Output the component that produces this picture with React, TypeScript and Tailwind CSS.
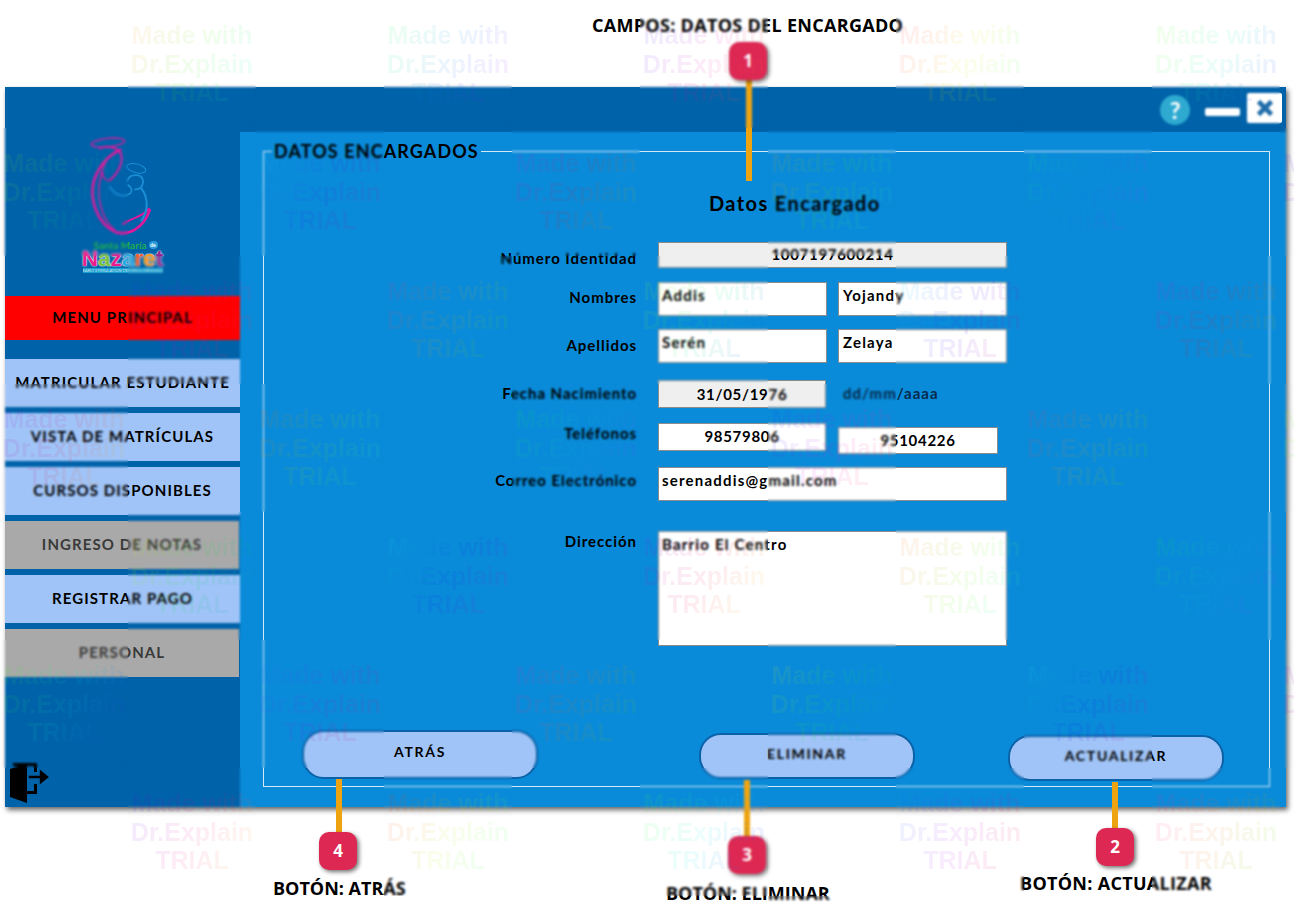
import React from "react";

const navBlue = "bg-[#a0c4f7] text-black h-[48px]";
const navGray = "bg-[#a9a9a9] text-[#3a3a3a] w-[234px] h-[48px]";

function NavItem({ text, cls, mt }: { text: string; cls: string; mt: string }) {
  return (
    <div className={`${cls} ${mt} flex items-center justify-center text-[15px] font-bold tracking-[1.1px] leading-none pb-[2px]`}>
      {text}
    </div>
  );
}

function Logo() {
  return (
    <div className="h-[209px] flex flex-col items-center pt-[43px]">
      <svg width="100" height="110" viewBox="0 0 300 330" fill="none" strokeLinecap="round" strokeLinejoin="round">
        <ellipse cx="105" cy="38" rx="50" ry="13" stroke="#e0189c" strokeWidth="4" transform="rotate(-6 105 38)" />
        <path d="M80 55C105 46 135 50 145 75C150 100 135 130 112 150" stroke="#e0189c" strokeWidth="6" />
        <path d="M142 60C105 75 70 115 60 165C52 215 75 280 125 305C165 320 212 295 230 240" stroke="#e0189c" strokeWidth="8" />
        <path d="M100 92C85 120 72 170 80 215C88 255 105 285 125 300" stroke="#e0189c" strokeWidth="4" />
        <path d="M150 282C175 262 205 265 228 236" stroke="#e0189c" strokeWidth="6" />
        <path d="M90 128C85 140 95 150 110 152" stroke="#e0189c" strokeWidth="4" />
        <ellipse cx="190" cy="115" rx="29" ry="13" stroke="#1a8fd6" strokeWidth="3" transform="rotate(14 190 115)" />
        <path d="M163 152C170 130 205 130 210 150C212 168 200 180 186 178" stroke="#1a8fd6" strokeWidth="5" />
        <path d="M110 170C125 195 150 205 172 190C180 180 175 172 165 165" stroke="#1a8fd6" strokeWidth="5" />
        <path d="M205 175C228 205 225 245 205 272" stroke="#1a8fd6" strokeWidth="6" />
      </svg>
      <div className="mt-[1px] h-[8px] w-[80px] flex items-center justify-center gap-[2px] text-[10px] leading-[8px] font-bold text-[#1fae4f] pl-[6px]">
        <span>Santa María</span>
        <span className="w-[9px] h-[8px] rounded-full bg-[#2b9bd8] text-white text-[5px] text-center">de</span>
      </div>
      <div className="h-[19px] text-[22.5px] leading-[19px] font-bold [font-family:'Liberation_Sans',sans-serif] [text-shadow:0_0_2px_#ffffff,0_0_1px_#ffffff]">
        <span className="text-[#e91e8c]">N</span>
        <span className="text-[#7cc242]">a</span>
        <span className="text-[#e91e8c]">z</span>
        <span className="text-[#29a8df]">a</span>
        <span className="text-[#f15a29]">r</span>
        <span className="text-[#f7941d]">e</span>
        <span className="text-[#92278f]">t</span>
      </div>
      <div className="w-[80px] h-[5px] bg-[#1b9fd0] text-[#cfeaf5] text-[4px] leading-[5px] text-center whitespace-nowrap overflow-hidden">
        EARLY STIMULATION CENTER &amp; PRESCHOOL
      </div>
    </div>
  );
}

function ExitIcon() {
  return (
    <svg className="mt-[85px] ml-[4px]" width="42" height="41" viewBox="0 0 42 41" fill="#000000">
      <path d="M1 7L18 1V41L1 35Z" />
      <path d="M4 1H28V10H25V4H4Z" />
      <path d="M28 22V32H18V29H25V22Z" />
      <path d="M19 13H30V6L41 15L30 24V17H19Z" fill="#000000" stroke="#0062a9" strokeWidth="1.6" />
    </svg>
  );
}

function Sidebar() {
  return (
    <aside className="w-[235px] flex flex-col shrink-0">
      <Logo />
      <NavItem text="MENU PRINCIPAL" cls="bg-[#ff0000] text-black h-[44px]" mt="" />
      <NavItem text="MATRICULAR ESTUDIANTE" cls={navBlue} mt="mt-[19px]" />
      <NavItem text="VISTA DE MATRÍCULAS" cls={navBlue} mt="mt-[6px]" />
      <NavItem text="CURSOS DISPONIBLES" cls={navBlue} mt="mt-[6px]" />
      <NavItem text="INGRESO DE NOTAS" cls={navGray} mt="mt-[6px]" />
      <NavItem text="REGISTRAR PAGO" cls={navBlue} mt="mt-[6px]" />
      <NavItem text="PERSONAL" cls={navGray} mt="mt-[6px]" />
      <ExitIcon />
    </aside>
  );
}

function TitleBar() {
  return (
    <div className="h-[45px] flex items-start justify-end pr-[4px]">
      <div className="mt-[8px] w-[30px] h-[30px] rounded-full bg-[#2eaad1] text-white text-[23px] font-bold leading-[30px] text-center">?</div>
      <div className="mt-[21px] ml-[15px] w-[35px] h-[8px] rounded-[2px] bg-white" />
      <div className="mt-[6px] ml-[7px] w-[35px] h-[30px] rounded-[2px] bg-white flex items-center justify-center">
        <svg width="18" height="18" viewBox="0 0 18 18" fill="none" stroke="#1f6ca8" strokeWidth="4.6">
          <path d="M2.5 2.5L15.5 15.5M15.5 2.5L2.5 15.5" />
        </svg>
      </div>
    </div>
  );
}

function Field({ value, cls }: { value: string; cls: string }) {
  return (
    <div className={`${cls} border border-[#8b8b8b] text-[15px] font-bold text-black leading-[18px]`}>
      {value}
    </div>
  );
}

function Label({ text, cls }: { text: string; cls: string }) {
  return (
    <div className={`${cls} w-[373px] mr-[21px] shrink-0 text-right text-[15px] font-bold tracking-[0.95px] leading-[21px] text-black`}>
      {text}
    </div>
  );
}

function Btn({ text, cls }: { text: string; cls: string }) {
  return (
    <div className={`${cls} shrink-0 bg-[#a0c4f7] border-2 border-[#0b62a8] rounded-[22px] flex items-center justify-center text-[14px] font-bold tracking-[1.7px] text-black pb-[6px]`}>
      {text}
    </div>
  );
}

function Form() {
  return (
    <fieldset className="h-[647px] border border-[#d6e8f5]">
      <legend className="ml-[8px] px-[2px] h-[22px] leading-[22px] text-[18px] font-bold tracking-[1.1px] text-black">DATOS ENCARGADOS</legend>
      <div className="flex flex-col">
        <div className="mt-[29px] h-[24px] pl-[445px] text-[20px] leading-[24px] font-bold tracking-[1.4px] text-black">Datos Encargado</div>

        <div className="mt-[27px] flex items-start">
          <Label text="Número Identidad" cls="pt-[6px]" />
          <Field value="1007197600214" cls="w-[349px] h-[26px] bg-[#efefef] text-center pt-[2px] tracking-[0.7px]" />
        </div>
        <div className="mt-[13px] flex items-start">
          <Label text="Nombres" cls="pt-[5px]" />
          <Field value="Addis" cls="w-[169px] h-[34px] bg-white pl-[3px] pt-[3px] tracking-[1.2px]" />
          <Field value="Yojandy" cls="ml-[11px] w-[169px] h-[34px] bg-white pl-[4px] pt-[3px] tracking-[1.2px]" />
        </div>
        <div className="mt-[13px] flex items-start">
          <Label text="Apellidos" cls="pt-[6px]" />
          <Field value="Serén" cls="w-[169px] h-[34px] bg-white pl-[3px] pt-[3px] tracking-[1.2px]" />
          <Field value="Zelaya" cls="ml-[11px] w-[169px] h-[34px] bg-white pl-[4px] pt-[3px] tracking-[1.2px]" />
        </div>
        <div className="mt-[17px] flex items-start">
          <Label text="Fecha Nacimiento" cls="pt-[3px]" />
          <Field value="31/05/1976" cls="w-[168px] h-[28px] bg-[#efefef] text-center pt-[4px] tracking-[0.7px]" />
          <div className="ml-[17px] pt-[3px] text-[15px] leading-[20px] font-bold tracking-[1px] text-[#062a4a]">dd/mm/aaaa</div>
        </div>
        <div className="mt-[15px] flex items-start">
          <Label text="Teléfonos" cls="" />
          <Field value="98579806" cls="w-[168px] h-[28px] bg-white text-center pt-[3px] tracking-[0.7px]" />
          <Field value="95104226" cls="ml-[12px] mt-[4px] w-[160px] h-[27px] bg-white text-center pt-[3px] tracking-[0.7px]" />
        </div>
        <div className="mt-[13px] flex items-start">
          <Label text="Correo Electrónico" cls="pt-[3px]" />
          <Field value="serenaddis@gmail.com" cls="w-[349px] h-[34px] bg-white pl-[3px] pt-[3px] tracking-[1.2px]" />
        </div>
        <div className="mt-[30px] flex items-start">
          <Label text="Dirección" cls="" />
          <Field value="Barrio El Centro" cls="w-[349px] h-[115px] bg-white pl-[3px] pt-[3px] tracking-[1.2px]" />
        </div>

        <div className="mt-[84px] flex items-start">
          <Btn text="ATRÁS" cls="ml-[38px] w-[236px] h-[49px]" />
          <Btn text="ELIMINAR" cls="ml-[161px] mt-[3px] w-[216px] h-[46px]" />
          <Btn text="ACTUALIZAR" cls="ml-[93px] mt-[5px] w-[216px] h-[46px]" />
        </div>
      </div>
    </fieldset>
  );
}

function Marker({ n, lineCls, badgeCls }: { n: string; lineCls: string; badgeCls: string }) {
  return (
    <>
      <div className={`absolute w-[6px] bg-[#eea411] ${lineCls}`} />
      <div className={`absolute w-[38px] h-[38px] rounded-[10px] bg-[#dd2853] shadow-[2px_2px_4px_rgba(0,0,0,0.55)] flex items-center justify-center text-white text-[17px] font-bold [font-family:'Open_Sans',sans-serif] ${badgeCls}`}>
        {n}
      </div>
    </>
  );
}

function Caption({ text, cls }: { text: string; cls: string }) {
  return (
    <div className={`absolute whitespace-nowrap text-[18px] leading-[22px] font-bold text-black [font-family:'Open_Sans',sans-serif] ${cls}`}>
      {text}
    </div>
  );
}

function Watermarks() {
  const tiles: { r: number; c: number }[] = [];
  for (let r = 0; r < 8; r++) for (let c = 0; c < 11; c++) if ((r + c) % 2 === 1) tiles.push({ r, c });
  return (
    <>
      {tiles.map(({ r, c }) => {
        const hue = (r * 97 + c * 53 + 340) % 360;
        const grad = `linear-gradient(120deg, hsla(${hue},100%,50%,0.08), hsla(${hue + 70},100%,45%,0.08), hsla(${hue + 150},100%,50%,0.08))`;
        return (
          <div
            key={`${r}-${c}`}
            className="absolute w-[128px] h-[128px] backdrop-blur-[1px] pointer-events-none pt-[21px] flex flex-col items-center"
            style={{ left: c * 128, top: r * 128 }}
          >
            <div
              className="text-[25px] leading-[28.5px] font-bold text-center text-transparent bg-clip-text whitespace-nowrap [font-family:'Liberation_Sans',sans-serif]"
              style={{ backgroundImage: grad }}
            >
              Made with
              <br />
              Dr.Explain
              <br />
              TRIAL
            </div>
          </div>
        );
      })}
    </>
  );
}

export default function App() {
  return (
    <div className="relative w-[1294px] h-[920px] overflow-hidden bg-white pt-[87px] pl-[5px] [font-family:Lato,sans-serif]">
      <div className="w-[1281px] h-[720px] bg-[#0062a9] flex shadow-[2px_3px_5px_rgba(0,0,0,0.6)]">
        <Sidebar />
        <main className="flex-1 flex flex-col min-w-0">
          <TitleBar />
          <div className="flex-1 bg-[#0a8bd9] pt-[8px] pl-[23px] pr-[16px]">
            <Form />
          </div>
        </main>
      </div>

      <Marker n="1" lineCls="left-[746px] top-[78px] h-[103px]" badgeCls="left-[729px] top-[42px]" />
      <Marker n="2" lineCls="left-[1112px] top-[782px] h-[50px]" badgeCls="left-[1096px] top-[828px]" />
      <Marker n="3" lineCls="left-[744px] top-[780px] h-[60px]" badgeCls="left-[728px] top-[836px]" />
      <Marker n="4" lineCls="left-[336px] top-[779px] h-[55px]" badgeCls="left-[319px] top-[832px]" />

      <Caption text="CAMPOS: DATOS DEL ENCARGADO" cls="left-[592px] top-[14px] tracking-[0.3px]" />
      <Caption text="BOTÓN: ACTUALIZAR" cls="left-[1020px] top-[872px] tracking-[0.3px]" />
      <Caption text="BOTÓN: ELIMINAR" cls="left-[666px] top-[882px]" />
      <Caption text="BOTÓN: ATRÁS" cls="left-[273px] top-[877px]" />

      <Watermarks />
    </div>
  );
}
